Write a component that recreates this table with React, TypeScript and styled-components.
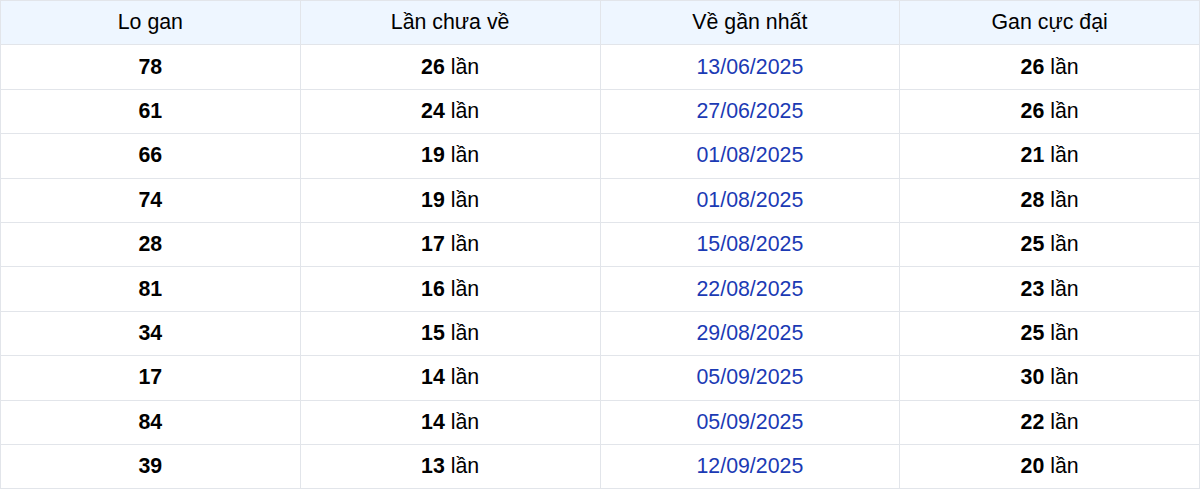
import styled, { createGlobalStyle } from "styled-components";

const GlobalStyle = createGlobalStyle`
  body {
    margin: 0;
    background: #ffffff;
    font-family: "Liberation Sans", Arial, sans-serif;
  }
`;

// Whole table
const Table = styled.table`
  width: 1200px;
  border-collapse: collapse;
  table-layout: fixed;
  font-size: 21.33px;
  color: #000000;
`;

// Header cells
const Th = styled.th`
  height: 43.4px;
  padding: 0;
  font-weight: 400;
  text-align: center;
  background: #eef6ff;
  border: 1px solid #e2e5ea;
`;

// Body cells
const Td = styled.td<{ $blue?: boolean }>`
  height: 43.4px;
  padding: 0;
  text-align: center;
  border: 1px solid #e2e5ea;
  color: ${(p) => (p.$blue ? "#1b3ab4" : "#000000")};
`;

const Num = styled.b`
  font-weight: 700;
`;

const rows = [
  ["78", "26", "13/06/2025", "26"],
  ["61", "24", "27/06/2025", "26"],
  ["66", "19", "01/08/2025", "21"],
  ["74", "19", "01/08/2025", "28"],
  ["28", "17", "15/08/2025", "25"],
  ["81", "16", "22/08/2025", "23"],
  ["34", "15", "29/08/2025", "25"],
  ["17", "14", "05/09/2025", "30"],
  ["84", "14", "05/09/2025", "22"],
  ["39", "13", "12/09/2025", "20"],
];

const App = () => {
  return (
    <>
      <GlobalStyle />
      <Table>
        <thead>
          <tr>
            <Th>Lo gan</Th>
            <Th>Lần chưa về</Th>
            <Th>Về gần nhất</Th>
            <Th>Gan cực đại</Th>
          </tr>
        </thead>
        <tbody>
          {rows.map(([lo, count, date, max]) => (
            <tr key={lo}>
              <Td>
                <Num>{lo}</Num>
              </Td>
              <Td>
                <Num>{count}</Num> lần
              </Td>
              <Td $blue>{date}</Td>
              <Td>
                <Num>{max}</Num> lần
              </Td>
            </tr>
          ))}
        </tbody>
      </Table>
    </>
  );
};

export default App;
